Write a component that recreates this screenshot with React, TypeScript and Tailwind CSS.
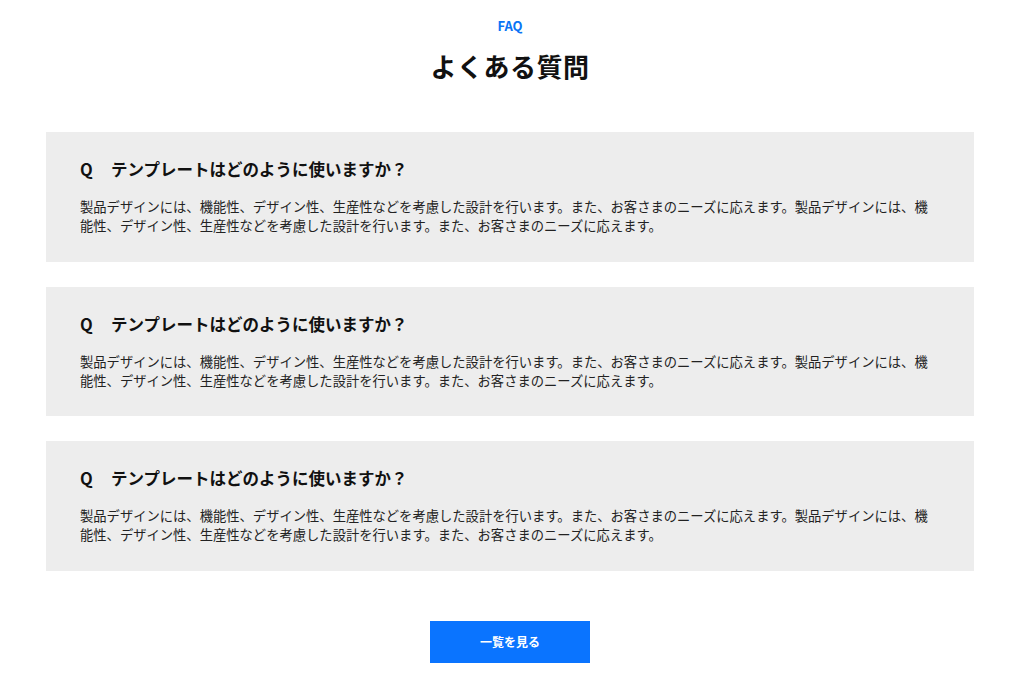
const faqs = [1, 2, 3].map((id) => ({
  id,
  question: "テンプレートはどのように使いますか？",
  answer:
    "製品デザインには、機能性、デザイン性、生産性などを考慮した設計を行います。また、お客さまのニーズに応えます。製品デザインには、機能性、デザイン性、生産性などを考慮した設計を行います。また、お客さまのニーズに応えます。",
}));

export default function App() {
  return (
    <div
      className="min-h-[685px] w-[1020px] bg-white text-[#222]"
      style={{ fontFamily: '"Noto Sans CJK JP", "Noto Sans", sans-serif' }}
    >
      <section className="mx-auto flex w-[928px] flex-col items-center pt-[16px]">
        <p className="text-[13px] font-bold leading-[20px] text-[#0a74f5]">FAQ</p>
        <h2 className="mt-[12px] text-[26px] font-bold leading-[36px] tracking-[0.5px] text-[#111]">
          よくある質問
        </h2>

        {/* List */}
        <div className="mt-[48px] flex w-full flex-col gap-[25px]">
          {faqs.map((faq) => (
            <div key={faq.id} className="bg-[#ededed] px-[34px] pb-[26.5px] pt-[25px]">
              <h3 className="flex text-[16.5px] font-bold leading-[24px] text-[#111]">
                <span className="w-[31px]">Q</span>
                {faq.question}
              </h3>
              <p className="mt-[16px] text-[13.3px] leading-[19px]">{faq.answer}</p>
            </div>
          ))}
        </div>

        <button className="mt-[50.5px] h-[42px] w-[160px] bg-[#0a74ff] text-[12px] font-bold text-white">
          一覧を見る
        </button>
      </section>
    </div>
  );
}
